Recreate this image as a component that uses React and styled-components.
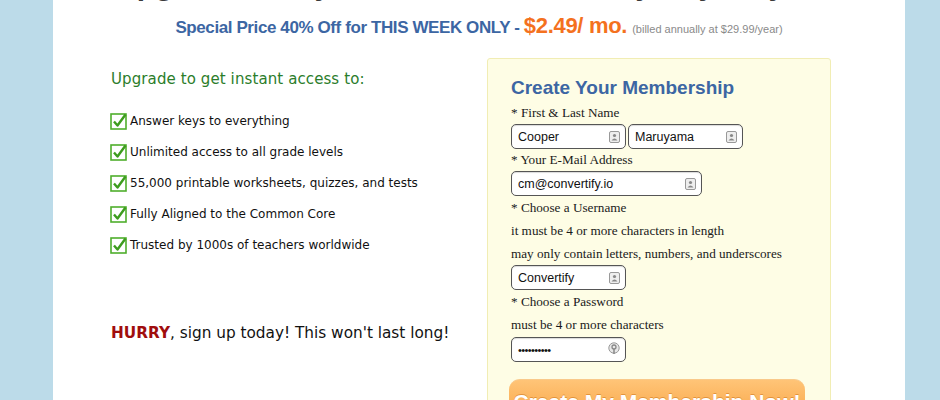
import React from 'react'
import styled, { createGlobalStyle } from 'styled-components'

const COLOR_BLUE = '#3c66a3'
const COLOR_ORANGE = '#f4711e'
const COLOR_GREEN = '#2b7d2b'
const COLOR_CHECK = '#4fae2c'

const GlobalStyle = createGlobalStyle`
  html, body { margin: 0; padding: 0; }
  body {
    background: #bcdbe9;
    overflow: hidden;
    height: 400px;
  }
`

const Page = styled.div`
  margin-left: 53px;
  width: 852px;
  height: 400px;
  background: #fff;
  overflow: hidden;
`

const Title = styled.h1`
  margin: -33px 0 0;
  padding-left: 62px;
  height: 36px;
  font: bold 30px/36px "Liberation Sans", Arial, sans-serif;
  color: #3a3a3a;
  white-space: nowrap;
`

const PriceLine = styled.div`
  margin-top: 11px;
  text-align: center;
  font-family: "Liberation Sans", Arial, sans-serif;
  font-weight: bold;
  color: ${COLOR_BLUE};
  font-size: 17px;
  line-height: 24px;
  letter-spacing: -0.4px;
  white-space: nowrap;
  & > .price { color: ${COLOR_ORANGE}; font-size: 22px; letter-spacing: -0.3px; }
  & > .billed { color: #8a8a8a; font-size: 11px; font-weight: normal; letter-spacing: 0; margin-left: 5px; }
`

const Columns = styled.div`
  display: flex;
  margin-top: 17px;
  padding-left: 58px;
`

const Left = styled.div`
  width: 376px;
  font-family: "DejaVu Sans", Verdana, sans-serif;
`

const LeftHead = styled.div`
  margin-top: 12px;
  font-size: 15px;
  color: ${COLOR_GREEN};
  letter-spacing: 0.1px;
`

const List = styled.ul`
  list-style: none;
  margin: 24px 0 0 -1px;
  padding: 0;
  display: flex;
  flex-direction: column;
  gap: 13px;
`

const Item = styled.li`
  display: flex;
  align-items: center;
  height: 18px;
  font-size: 12px;
  color: #111;
`

const Hurry = styled.div`
  margin-top: 70px;
  font-size: 15.3px;
  color: #111;
  & > b { color: #a00d0d; }
`

const Box = styled.div`
  width: 344px;
  height: 400px;
  box-sizing: border-box;
  padding: 17px 0 0 23px;
  background: #fefde5;
  border: 1px solid #f1edb4;
  border-radius: 3px;
  font-family: "Liberation Serif", Georgia, serif;
`

const BoxTitle = styled.div`
  margin-bottom: 3px;
  font: bold 19px/24px "Liberation Sans", Arial, sans-serif;
  color: ${COLOR_BLUE};
`

const Label = styled.div`
  margin-top: ${p => p.$mt || 0}px;
  font-size: 13.2px;
  line-height: ${p => p.$tall ? '23px' : '20px'};
  color: #1a1a1a;
  white-space: nowrap;
`

const Row = styled.div`
  display: flex;
  gap: 2px;
  margin: ${p => p.$tight ? '0 0 1px' : '1px 0'};
`

const Field = styled.div`
  position: relative;
  width: ${p => p.$w}px;
  height: 25px;
  box-sizing: border-box;
  border: 1px solid #555;
  border-radius: 5px;
  background: #fff;
  box-shadow: inset 0 1px 1px rgba(0,0,0,0.15);
  display: flex;
  align-items: center;
  padding: 0 22px 0 6px;
  font: 12.5px "Liberation Sans", Arial, sans-serif;
  color: #111;
  & > svg { position: absolute; right: 5px; top: 6px; }
  &.pass { font-size: 11px; letter-spacing: -0.6px; }
`

const Button = styled.div`
  margin: 17px 0 0 -2px;
  width: 296px;
  height: 42px;
  border-radius: 11px;
  background: linear-gradient(#ffc477, #f8a444);
  border-top: 1px solid #f9c98a;
  text-align: center;
  font: bold 21px/44px "Liberation Sans", Arial, sans-serif;
  color: #fff;
  text-shadow: 0 -1px 0 rgba(200, 110, 20, 0.5);
`

const Check = () => (
  <svg width="18" height="18" viewBox="0 0 18 18" style={{ marginRight: 2, flex: 'none' }}>
    <rect x="1" y="2" width="15" height="15" fill="#fff" stroke={COLOR_CHECK} strokeWidth="1.6" />
    <path d="M4 9.5 L7.5 13.5 L15.5 2.5" fill="none" stroke="#3d9c1e" strokeWidth="2.4" strokeLinejoin="round" />
  </svg>
)

const CardIcon = () => (
  <svg width="11" height="12" viewBox="0 0 11 12">
    <rect x="0.5" y="0.5" width="10" height="11" rx="1.5" fill="#eee" stroke="#999" />
    <circle cx="5.5" cy="4.5" r="1.6" fill="#888" />
    <path d="M2.5 9.5 Q5.5 5.5 8.5 9.5 Z" fill="#888" />
  </svg>
)

const KeyIcon = () => (
  <svg width="12" height="14" viewBox="0 0 12 14" style={{ top: 4 }}>
    <circle cx="6" cy="6" r="5.2" fill="#e8e8e8" stroke="#999" />
    <circle cx="6" cy="5" r="2" fill="none" stroke="#888" strokeWidth="1.3" />
    <path d="M6 7 V12" stroke="#888" strokeWidth="1.5" />
  </svg>
)

const features = [
  'Answer keys to everything',
  'Unlimited access to all grade levels',
  '55,000 printable worksheets, quizzes, and tests',
  'Fully Aligned to the Common Core',
  'Trusted by 1000s of teachers worldwide'
]

export default function App () {
  return <>
    <GlobalStyle />
    <Page>
      <Title>Upgrade Today for Full Access, Every Day, Anytime!</Title>
      <PriceLine>
        Special Price 40% Off for THIS WEEK ONLY - <span className="price">$2.49/ mo.</span>
        <span className="billed">(billed annually at $29.99/year)</span>
      </PriceLine>
      <Columns>
        <Left>
          <LeftHead>Upgrade to get instant access to:</LeftHead>
          <List>
            {features.map(f => <Item key={f}><Check />{f}</Item>)}
          </List>
          <Hurry><b>HURRY</b>, sign up today! This won't last long!</Hurry>
        </Left>
        <Box>
          <BoxTitle>Create Your Membership</BoxTitle>
          <Label>* First &amp; Last Name</Label>
          <Row>
            <Field $w={115}>Cooper<CardIcon /></Field>
            <Field $w={115}>Maruyama<CardIcon /></Field>
          </Row>
          <Label>* Your E-Mail Address</Label>
          <Row>
            <Field $w={191}>cm@convertify.io<CardIcon /></Field>
          </Row>
          <Label $tall $mt={-1}>* Choose a Username</Label>
          <Label $tall>it must be 4 or more characters in length</Label>
          <Label $tall>may only contain letters, numbers, and underscores</Label>
          <Row $tight>
            <Field $w={115}>Convertify<CardIcon /></Field>
          </Row>
          <Label $tall $mt={-1}>* Choose a Password</Label>
          <Label $tall>must be 4 or more characters</Label>
          <Row>
            <Field $w={115} className="pass">••••••••••<KeyIcon /></Field>
          </Row>
          <Button>Create My Membership Now!</Button>
        </Box>
      </Columns>
    </Page>
  </>
}
